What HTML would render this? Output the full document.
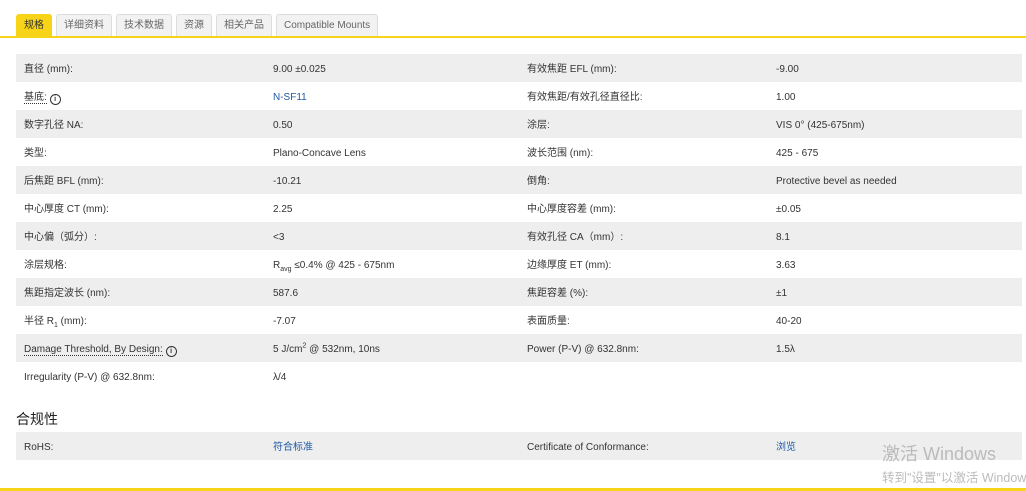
<!DOCTYPE html>
<html><head><meta charset="utf-8"><style>
body{margin:0;width:1026px;height:491px;overflow:hidden;background:#fff;font-family:"Liberation Sans","Noto Sans CJK SC",sans-serif;font-size:10px;color:#333;position:relative}
.tabs{position:absolute;left:16px;top:14px;height:23px;display:flex;gap:4px}
.tab{border:1px solid #ddd;border-bottom:none;background:#f2f2f2;color:#666;padding:0 7px;line-height:22px;border-radius:3px 3px 0 0;font-size:10px}
.tab.a{background:#f7d417;border-color:#f7d417;color:#333}
.line{position:absolute;left:0;width:1026px;height:2px;background:#f7d417}
table{position:absolute;left:16px;width:1006px;border-collapse:collapse;table-layout:fixed}
td{height:25px;padding:3px 0 0 8px;white-space:nowrap;line-height:14px;vertical-align:middle;overflow:hidden}
sub,sup{line-height:0;font-size:7px}
tr.g td{background:#eee}
a{color:#1d5aa6;text-decoration:none}
.u{border-bottom:1px dotted #333}
.i{display:inline-block;width:9px;height:9px;border:1.3px solid #333;border-radius:50%;font-size:7px;line-height:9px;text-align:center;font-weight:bold;vertical-align:-1px}
h3{position:absolute;left:16px;top:409px;margin:0;font-size:14px;font-weight:normal;color:#222}
.wm{position:absolute;left:882px;top:440px;color:#bbb;font-size:18px;white-space:nowrap}
.wm2{position:absolute;left:882px;top:467px;color:#bbb;font-size:12.5px;white-space:nowrap}
</style></head><body>
<div class="tabs"><div class="tab a">规格</div><div class="tab">详细资料</div><div class="tab">技术数据</div><div class="tab">资源</div><div class="tab">相关产品</div><div class="tab">Compatible Mounts</div></div>
<div class="line" style="top:36px"></div>
<table style="top:54px">
<colgroup><col style="width:249px"><col style="width:254px"><col style="width:249px"><col></colgroup>
<tr class="g"><td>直径 (mm):</td><td>9.00 ±0.025</td><td>有效焦距 EFL (mm):</td><td>-9.00</td></tr>
<tr><td><span class="u">基底:</span> <span class="i">i</span></td><td><a>N-SF11</a></td><td>有效焦距/有效孔径直径比:</td><td>1.00</td></tr>
<tr class="g"><td>数字孔径 NA:</td><td>0.50</td><td>涂层:</td><td>VIS 0° (425-675nm)</td></tr>
<tr><td>类型:</td><td>Plano-Concave Lens</td><td>波长范围 (nm):</td><td>425 - 675</td></tr>
<tr class="g"><td>后焦距 BFL (mm):</td><td>-10.21</td><td>倒角:</td><td>Protective bevel as needed</td></tr>
<tr><td>中心厚度 CT (mm):</td><td>2.25</td><td>中心厚度容差 (mm):</td><td>±0.05</td></tr>
<tr class="g"><td>中心偏（弧分）:</td><td>&lt;3</td><td>有效孔径 CA（mm）:</td><td>8.1</td></tr>
<tr><td>涂层规格:</td><td>R<sub>avg</sub> ≤0.4% @ 425 - 675nm</td><td>边缘厚度 ET (mm):</td><td>3.63</td></tr>
<tr class="g"><td>焦距指定波长 (nm):</td><td>587.6</td><td>焦距容差 (%):</td><td>±1</td></tr>
<tr><td>半径 R<sub>1</sub> (mm):</td><td>-7.07</td><td>表面质量:</td><td>40-20</td></tr>
<tr class="g"><td><span class="u">Damage Threshold, By Design:</span> <span class="i">i</span></td><td>5 J/cm<sup>2</sup> @ 532nm, 10ns</td><td>Power (P-V) @ 632.8nm:</td><td>1.5λ</td></tr>
<tr><td>Irregularity (P-V) @ 632.8nm:</td><td>λ/4</td><td></td><td></td></tr>
</table>
<h3>合规性</h3>
<table style="top:432px">
<colgroup><col style="width:249px"><col style="width:254px"><col style="width:249px"><col></colgroup>
<tr class="g"><td>RoHS:</td><td><a>符合标准</a></td><td>Certificate of Conformance:</td><td><a>浏览</a></td></tr>
</table>
<div class="wm">激活 Windows</div>
<div class="wm2">转到"设置"以激活 Windows</div>
<div class="line" style="top:488px;height:3px"></div>
</body></html>
